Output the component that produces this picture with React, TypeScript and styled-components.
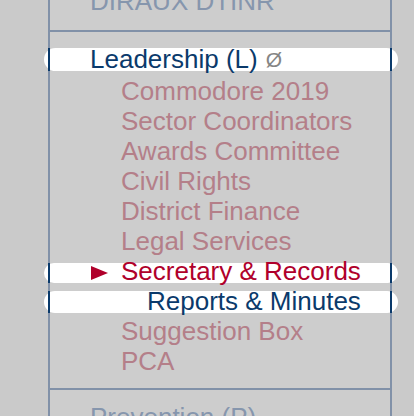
import React from "react";
import styled, { createGlobalStyle } from "styled-components";

const GlobalStyle = createGlobalStyle`
  html, body {
    margin: 0;
    padding: 0;
    background: #cacaca;
    overflow: hidden;
  }
  body {
    font-family: "Liberation Sans", Arial, sans-serif;
  }
`;

const Page = styled.div`
  width: 414px;
  height: 416px;
  overflow: hidden;
  background: #cacaca;
`;

const Panel = styled.nav`
  margin-left: 48px;
  margin-top: -14px;
  width: 340px;
  border-left: 2px solid #8191a8;
  border-right: 2px solid #8191a8;
  background: #cdcdcd;
`;

const Section = styled.div<{ $first?: boolean; $bottom?: number }>`
  padding: 12px 0 ${(p) => p.$bottom ?? 14}px;
  border-top: ${(p) => (p.$first ? "none" : "2px solid #8191a8")};
  margin-left: ${(p) => (p.$first ? "0" : "-2px")};
  margin-right: ${(p) => (p.$first ? "0" : "-2px")};
  padding-left: ${(p) => (p.$first ? "0" : "2px")};
  padding-right: ${(p) => (p.$first ? "0" : "2px")};
  ${(p) => (p.$first ? "padding-top: 0;" : "")}
`;

const Row = styled.div<{
  $indent: number;
  $color: string;
  $pill?: boolean;
  $pillTop?: number;
  $pillBottom?: number;
  $after?: number;
}>`
  position: relative;
  display: flex;
  align-items: center;
  height: 30px;
  line-height: 30px;
  font-size: 26px;
  white-space: nowrap;
  padding-left: ${(p) => p.$indent}px;
  margin-bottom: ${(p) => p.$after ?? 0}px;
  color: ${(p) => p.$color};

  ${(p) =>
    p.$pill
      ? `
    &::before {
      content: "";
      position: absolute;
      left: -6px;
      right: -8px;
      top: ${p.$pillTop ?? 4}px;
      bottom: ${p.$pillBottom ?? 3}px;
      background: #ffffff;
      border-radius: 12px;
      z-index: 0;
    }
    &::after {
      content: "";
      position: absolute;
      left: -2px;
      right: -2px;
      top: ${p.$pillTop ?? 4}px;
      bottom: ${p.$pillBottom ?? 3}px;
      border-left: 2px solid #0a3a6b;
      border-right: 2px solid #0a3a6b;
      z-index: 1;
    }
  `
      : ""}
`;

const Label = styled.span`
  position: relative;
  z-index: 2;
`;

const Marker = styled.svg`
  position: relative;
  z-index: 2;
  width: 17px;
  height: 14px;
  margin-left: -30px;
  margin-right: 13px;
  margin-top: 3px;
`;

const Empty = styled.span`
  position: relative;
  z-index: 2;
  font-family: "Liberation Sans", Arial, sans-serif;
  font-size: 21px;
  color: #858585;
  margin-left: 8px;
  margin-top: 2px;
`;

const NAVY = "#0a3a6b";
const RED = "#b0002b";
const FADED = "#b47f89";
const FADED_BLUE = "#8696ad";

const items = [
  "Commodore 2019",
  "Sector Coordinators",
  "Awards Committee",
  "Civil Rights",
  "District Finance",
  "Legal Services",
];

export default function App() {
  return (
    <Page>
      <GlobalStyle />
      <Panel>
        <Section $first>
          <Row $indent={40} $color={FADED_BLUE}>
            <Label>DIRAUX DTINR</Label>
          </Row>
        </Section>
        <Section $bottom={12}>
          <Row $indent={40} $color={NAVY} $pill $pillTop={4} $pillBottom={3} $after={2}>
            <Label>Leadership (L)</Label>
            <Empty>Ø</Empty>
          </Row>
          {items.map((t) => (
            <Row key={t} $indent={71} $color={FADED}>
              <Label>{t}</Label>
            </Row>
          ))}
          <Row $indent={71} $color={RED} $pill $pillTop={7} $pillBottom={3}>
            <Marker viewBox="0 0 17 14">
              <polygon points="0,0 17,7 0,14" fill={RED} />
            </Marker>
            <Label>Secretary &amp; Records</Label>
          </Row>
          <Row $indent={97} $color={NAVY} $pill $pillTop={5} $pillBottom={3}>
            <Label>Reports &amp; Minutes</Label>
          </Row>
          <Row $indent={71} $color={FADED}>
            <Label>Suggestion Box</Label>
          </Row>
          <Row $indent={71} $color={FADED}>
            <Label>PCA</Label>
          </Row>
        </Section>
        <Section>
          <Row $indent={40} $color={FADED_BLUE}>
            <Label>Prevention (P)</Label>
          </Row>
        </Section>
      </Panel>
    </Page>
  );
}
